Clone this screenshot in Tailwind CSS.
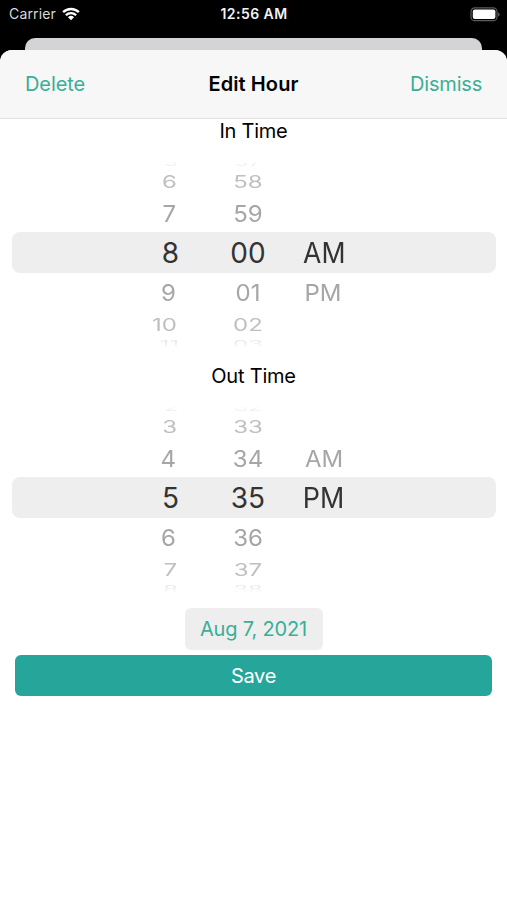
<!DOCTYPE html>
<html lang="en">
<head>
<meta charset="utf-8">
<title>Edit Hour</title>
<script src="https://cdn.jsdelivr.net/npm/@tailwindcss/browser@4"></script>
</head>
<body class="w-[507px] h-[900px] overflow-hidden bg-black font-['Inter','Liberation_Sans',sans-serif] text-black">
<div class="flex flex-col h-[900px]">
  <header class="h-[38px] pl-[8px] pr-[7px] pt-[4px] grid grid-cols-[1fr_auto_1fr] items-start text-white">
    <div class="flex items-center gap-[6px] h-[20px] pl-px">
      <span class="text-[14px] leading-[20px] text-[#d8d8d8] tracking-[0.15px]">Carrier</span>
      <svg class="w-[18px] h-[14px]" viewBox="0 0 19 14" fill="none" stroke="#fff" stroke-width="2.5"><path d="M1.2 5.1a11.9 11.9 0 0 1 16.6 0"/><path d="M4.1 8.3a7.6 7.6 0 0 1 10.8 0"/><path d="M9.5 13.6 6.3 10.4a4.6 4.6 0 0 1 6.4 0z" fill="#fff" stroke="none"/></svg>
    </div>
    <div class="text-center text-[14px] leading-[20px] font-semibold tracking-[0.45px] text-[#f2f2f2] whitespace-nowrap">12:56 AM</div>
    <div class="flex justify-end h-[20px] items-center">
      <svg class="w-[31px] h-[15px]" viewBox="0 0 31 15"><rect x="2" y=".9" width="26" height="12.8" rx="3.8" fill="none" stroke="#5c5c5c" stroke-width="1.2"/><rect x="3.8" y="2.6" width="22.6" height="9.4" rx="2" fill="#fff"/><path d="M29.2 5.2c1.9.8 1.9 3.5 0 4.3z" fill="#6a6a6a"/></svg>
    </div>
  </header>
  <div class="h-[12px] mx-[25px] rounded-t-[10px] bg-[#d4d4d6]"></div>
  <main class="flex-1 flex flex-col bg-white rounded-t-[12px] overflow-hidden">
    <nav class="h-[69px] shrink-0 bg-[#f7f7f7] border-b border-[#e2e2e2] px-[25px] grid grid-cols-[1fr_auto_1fr] items-center text-[20px]">
      <button class="text-left text-[#3aae97] tracking-[-0.1px]">Delete</button>
      <h1 class="font-semibold tracking-[0.1px]">Edit Hour</h1>
      <button class="text-right text-[#3aae97] tracking-[-0.2px]">Dismiss</button>
    </nav>
    <h2 class="h-[24px] leading-[24px] text-center text-[20px] tracking-[-0.25px]">In Time</h2>
    <section class="relative mt-[13px] h-[198px] ml-[12px] mr-[11px] flex text-[#a6a6a6] text-[24px] leading-none">
      <div class="absolute inset-x-0 top-[76px] h-[41px] rounded-[8px] bg-[#eeeeee]"></div>
      <div class="relative w-[170px] flex flex-col text-right">
        <div class="h-[14px] pr-[4px] flex items-center justify-end opacity-25 mask-t-from-20% mask-t-to-65%"><span class="scale-y-[.4]">5</span></div>
        <div class="h-[24px] pr-[5px] flex items-center justify-end text-[#c0c0c0]"><span class="scale-y-[.7]">6</span></div>
        <div class="h-[40px] pr-[6px] flex items-center justify-end"><span class="scale-y-[.96]">7</span></div>
        <div class="h-[39px] pb-px pr-[3px] flex items-center justify-end text-[28px] text-[#333]"><span>8</span></div>
        <div class="h-[40px] pr-[6px] flex items-center justify-end"><span class="scale-y-[.96]">9</span></div>
        <div class="h-[24px] pr-[5px] flex items-center justify-end text-[#c0c0c0]"><span class="scale-y-[.7]">10</span></div>
        <div class="h-[16px] pr-[3px] flex items-center justify-end opacity-25 mask-b-from-30% mask-b-to-65%"><span class="scale-y-[.4]">11</span></div>
      </div>
      <div class="relative ml-[36px] w-[60px] flex flex-col">
        <div class="h-[14px] flex items-center justify-center opacity-25 mask-t-from-20% mask-t-to-65%"><span class="scale-y-[.4]">57</span></div>
        <div class="h-[24px] flex items-center justify-center text-[#c0c0c0]"><span class="scale-y-[.7]">58</span></div>
        <div class="h-[40px] flex items-center justify-center"><span class="scale-y-[.96]">59</span></div>
        <div class="h-[39px] pb-px flex items-center justify-center text-[28px] text-[#333]"><span>00</span></div>
        <div class="h-[40px] flex items-center justify-center"><span class="scale-y-[.96]">01</span></div>
        <div class="h-[24px] flex items-center justify-center text-[#c0c0c0]"><span class="scale-y-[.7]">02</span></div>
        <div class="h-[16px] flex items-center justify-center opacity-25 mask-b-from-30% mask-b-to-65%"><span class="scale-y-[.4]">03</span></div>
      </div>
      <div class="relative ml-[12px] w-[68px] flex flex-col pt-[78px]">
        <div class="h-[39px] pb-px flex items-center justify-center text-[28px] text-[#333]"><span class="scale-x-[.95]">AM</span></div>
        <div class="h-[40px] pr-[2px] flex items-center justify-center"><span class="scale-y-[.96]">PM</span></div>
      </div>
    </section>
    <h2 class="mt-[10px] h-[24px] leading-[24px] text-center text-[20px] tracking-[-0.2px]">Out Time</h2>
    <section class="relative mt-[13px] h-[198px] ml-[12px] mr-[11px] flex text-[#a6a6a6] text-[24px] leading-none">
      <div class="absolute inset-x-0 top-[76px] h-[41px] rounded-[8px] bg-[#eeeeee]"></div>
      <div class="relative w-[170px] flex flex-col text-right">
        <div class="h-[14px] pr-[3px] flex items-center justify-end opacity-25 mask-t-from-20% mask-t-to-65%"><span class="scale-y-[.4]">2</span></div>
        <div class="h-[24px] pr-[5px] flex items-center justify-end text-[#c0c0c0]"><span class="scale-y-[.7]">3</span></div>
        <div class="h-[40px] pr-[6px] flex items-center justify-end"><span class="scale-y-[.96]">4</span></div>
        <div class="h-[39px] pb-px pr-[3px] flex items-center justify-end text-[28px] text-[#333]"><span>5</span></div>
        <div class="h-[40px] pr-[6px] flex items-center justify-end"><span class="scale-y-[.96]">6</span></div>
        <div class="h-[24px] pr-[5px] flex items-center justify-end text-[#c0c0c0]"><span class="scale-y-[.7]">7</span></div>
        <div class="h-[16px] pr-[4px] flex items-center justify-end opacity-25 mask-b-from-30% mask-b-to-65%"><span class="scale-y-[.4]">8</span></div>
      </div>
      <div class="relative ml-[36px] w-[60px] flex flex-col">
        <div class="h-[14px] flex items-center justify-center opacity-25 mask-t-from-20% mask-t-to-65%"><span class="scale-y-[.4]">32</span></div>
        <div class="h-[24px] flex items-center justify-center text-[#c0c0c0]"><span class="scale-y-[.7]">33</span></div>
        <div class="h-[40px] flex items-center justify-center"><span class="scale-y-[.96]">34</span></div>
        <div class="h-[39px] pb-px flex items-center justify-center text-[28px] text-[#333]"><span>35</span></div>
        <div class="h-[40px] flex items-center justify-center"><span class="scale-y-[.96]">36</span></div>
        <div class="h-[24px] flex items-center justify-center text-[#c0c0c0]"><span class="scale-y-[.7]">37</span></div>
        <div class="h-[16px] flex items-center justify-center opacity-25 mask-b-from-30% mask-b-to-65%"><span class="scale-y-[.4]">38</span></div>
      </div>
      <div class="relative ml-[12px] w-[68px] flex flex-col pt-[38px]">
        <div class="h-[40px] flex items-center justify-center"><span class="scale-y-[.96]">AM</span></div>
        <div class="h-[39px] pb-px flex items-center justify-center text-[28px] text-[#333]"><span class="scale-x-[.96]">PM</span></div>
      </div>
    </section>
    <button class="mt-[9px] mx-auto w-[138px] h-[42px] rounded-[6px] bg-[#eeeeee] text-[#3aae97] text-[20px] tracking-[-0.15px] whitespace-nowrap">Aug 7, 2021</button>
    <button class="mt-[5px] mx-[15px] h-[41px] rounded-[6px] bg-[#26a69a] text-white text-[20px] tracking-[-0.3px]">Save</button>
  </main>
</div>
</body>
</html>
